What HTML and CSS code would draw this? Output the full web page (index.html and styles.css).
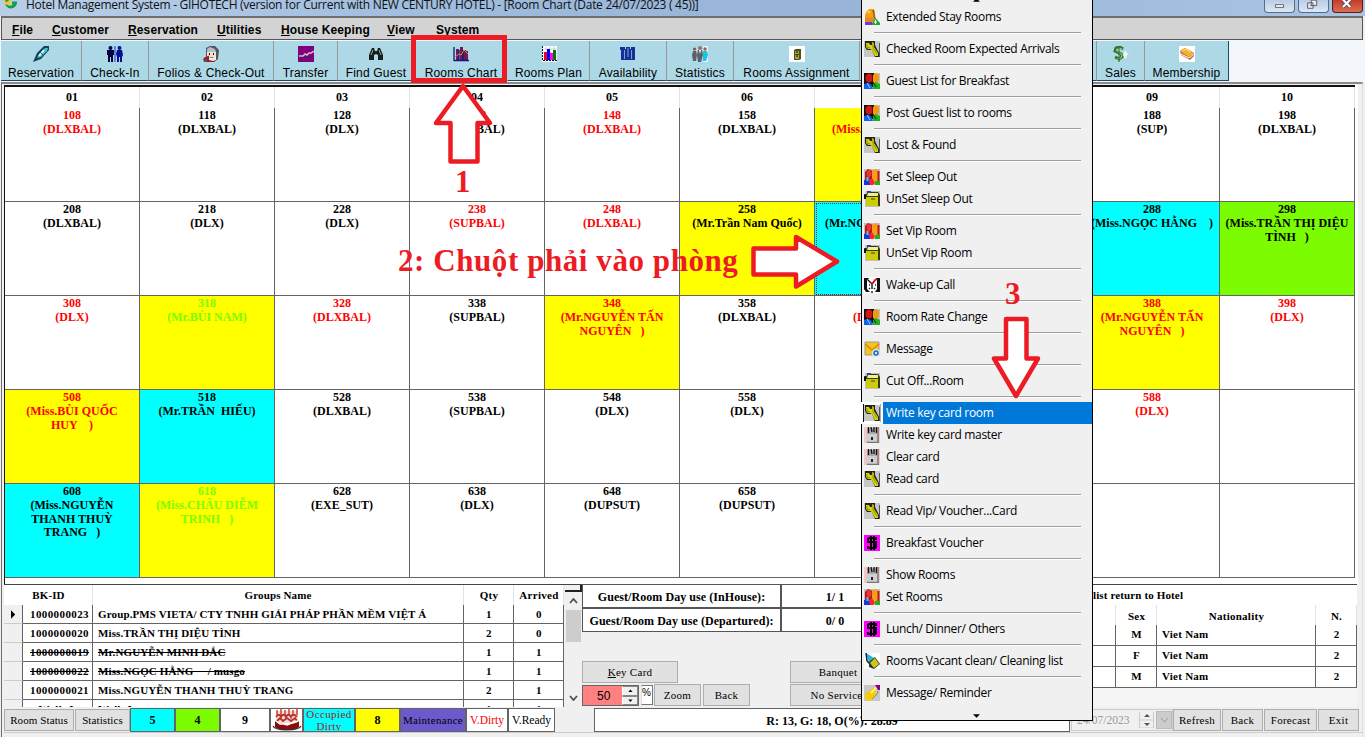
FILE: index.html
```html
<!DOCTYPE html>
<html lang="vi">
<head>
<meta charset="utf-8">
<title>Hotel Management System</title>
<link rel="stylesheet" href="styles.css">
</head>
<body>
<svg class="defs" width="0" height="0" aria-hidden="true">
  <symbol id="key" viewBox="0 0 16 16"><path fill="#c6c6c6" d="M0 0h16v16H0z"/><path d="M1 0h10v4l4 8v4h-4L8 9H3L1 6z" fill="#222"/><path d="M2 2h3l1 2h2V1l2 1v4l4 6v3h-3L8 9 6 8H4L2 6z" fill="#d6d60a"/><path d="M3 3v3l3 1M9 2v5l4 6" stroke="#8f8f00" fill="none"/><path d="M15.500 2v14" stroke="#555"/></symbol>
  <symbol id="people" viewBox="0 0 16 16"><path fill="#c0c0c0" d="M0 0h16v16H0z"/><path fill="#111" d="M0 0h10v14H0z"/><ellipse cx="5" cy="5" rx="3.500" ry="4.500" fill="#d21414"/><path d="M9 2l3-2 3 2v5l-2 3H9z" fill="#f09a10"/><path d="M0 16v-5l4-1 3 1 2 5z" fill="#1560e8"/><path d="M9 16v-5l3-2 4 2v5z" fill="#20b020"/><path d="M3 10l3 5" stroke="#7df"/><path d="M9 9l3 5" stroke="#222"/></symbol>
  <symbol id="sleep" viewBox="0 0 16 16"><path fill="#c0c0c0" d="M0 0h16v16H0z"/><path d="M1 3l3-3 5 2v10H1z" fill="#b8141c"/><ellipse cx="5" cy="4.500" rx="2.500" ry="3.500" fill="#e33"/><path d="M8 2l4-2 3 3v8l-4 2-3-2z" fill="#f4a014"/><path d="M0 11h5l2 5H0z" fill="#1638e0"/><path d="M5 11l3-2 3 5-2 2H6z" fill="#ff2030"/><path d="M11 12h5v4h-5z" fill="#20b020"/><path d="M14.500 2v10" stroke="#c01818" stroke-width="2"/><path d="M3.500 8v4" stroke="#40d0ff" stroke-width="2"/></symbol>
  <symbol id="folder" viewBox="0 0 16 16"><path fill="#c0c0c0" d="M1 0h15v16H1z"/><path d="M0 3h3V1h11l2 3v11H2V8H0z" fill="#3a3a10"/><path d="M2 6h12v9H2z" fill="#cccc08"/><path d="M3 0h4v2H3z" fill="#2438e0"/><path d="M4 2h10v3H3z" fill="#efef90"/><path d="M0 4h2v4H0z" fill="#111"/><path d="M7 7h4v2H7z" fill="#88880a"/></symbol>
  <symbol id="lock" viewBox="0 0 16 16"><path fill="#f4c8c8" d="M0 0h16v16H0z"/><path d="M3 8V1h10v15H3z" fill="#a8a8a8"/><path d="M4.500 0v6M7 0l1 5M10 0v5M12.500 0v6" stroke="#111" stroke-width="1.300"/><path d="M2 7h11v9H2z" fill="#cfcfcf"/><path d="M14 0v16M3 15.500h12" stroke="#777" stroke-width="1.500"/><path d="M7 10h2v3H7z" fill="#222"/></symbol>
  <symbol id="dollar" viewBox="0 0 16 16"><path fill="#f0f" d="M0 0h16v16H0z"/><path d="M12 5V3H5L4 4v3h8v5l-1 1H4v-2M7 1v14M10 1v14" fill="none" stroke="#000" stroke-width="2"/></symbol>
  <symbol id="clock" viewBox="0 0 16 16"><path fill="#fff" d="M0 0h16v16H0z"/><path d="M0 1h5L3 4v8l3 3H2l-2-3zM12 1h4v14h-5l2-3V4z" fill="#111"/><path d="M4 3l4 4v5M5 8h1M11 8h1M5 12l1-1M11 12l-1-1M8 14v2" stroke="#222" stroke-width="1.500" fill="none"/><path d="M8 7l4-5" stroke="#e00" stroke-width="2"/></symbol>
  <symbol id="mail" viewBox="0 0 16 16"><path d="M1 1h14v13H1z" fill="#f7c41c" stroke="#999"/><path d="M1 3l7 6 7-6" fill="none" stroke="#d28b00" stroke-width="1.500"/><circle cx="12" cy="12" r="4" fill="#d8e9f5"/><circle cx="12" cy="12" r="2" fill="none" stroke="#2264c4" stroke-width="1.500"/></symbol>
  <symbol id="extend" viewBox="0 0 16 16"><path d="M3 2l2-2h5l1 3-1 7H1V6z" fill="#f1a016"/><circle cx="5" cy="3" r="1.500" fill="#ffcb40"/><path d="M9 1l2 9" stroke="#a45b06" stroke-width="1.500"/><path d="M1 9l9-1 1 5H1z" fill="#e08a28"/><path d="M1 13h7v3H1z" fill="#703bd0"/><path d="M11.500 9l4.500 5v2H8v-2z" fill="#22a13a"/><path d="M11.500 11v4M10 13h3" stroke="#fff"/></symbol>
  <symbol id="brush" viewBox="0 0 16 16"><path fill="#fff" d="M0 0h16v16H0z"/><path d="M2 0l8 5-5 5z" fill="#27b8d0"/><path d="M2 0l1 8 3 3" stroke="#124" stroke-width="1.500" fill="none"/><path d="M5 9l6-5 5 7-6 5-5-2z" fill="#333"/><path d="M6 10l5-5 4 6-5 4z" fill="#d0c818"/></symbol>
  <symbol id="hand" viewBox="0 0 16 16"><path fill="#c8c8c8" d="M0 0h16v16H0z"/><path d="M2 15L1 9l4-3 6-4 1 3-1 6-5 5z" fill="#f6cd00"/><path d="M7 8l6-6" stroke="#fff37a" stroke-width="2"/><path d="M11 0h5v5h-2z" fill="#8b008b"/><path d="M8 14l5-5 1-3" stroke="#888" fill="none"/></symbol>
  <symbol id="t-pen" viewBox="0 0 16 16"><path d="M0 16l4-9 7-7h5v4l-8 9z" fill="#183f60"/><path d="M4 12l2-4 6-6h3l-1 3-6 6z" fill="#41c4cc"/><path d="M6 10l5-6" stroke="#fff" stroke-width="1.500"/><path d="M7 6l4 4" stroke="#16588c"/></symbol>
  <symbol id="t-checkin" viewBox="0 0 16 16"><path d="M8 0v16" stroke="#2030c0"/><circle cx="3.500" cy="2" r="2" fill="#000050"/><circle cx="12.500" cy="2" r="2" fill="#0010a0"/><path d="M0 4h7v5H6v7H4v-5H3v5H1V9H0z" fill="#000040"/><path d="M10 4h5l1 5-1 2v5h-2v-5h-1v5h-2v-5L9 8z" fill="#001090"/></symbol>
  <symbol id="t-folio" viewBox="0 0 16 16"><path d="M3 2l4-2h5l4 4-1 9-4 3H1l-1-3 3-1z" fill="#50556c"/><path d="M4 3l3-2 5 2 1 3H4z" fill="#b9bdc4"/><path d="M4 6h9v5H4z" fill="#f4e3c6"/><path d="M6 7h1v2H6zM10 7h1v2h-1z" fill="#111"/><path d="M1 13l4-2v4h5l3-2" fill="none" stroke="#a31b20" stroke-width="2"/><path d="M6 11l3 1 4-2v4l-3 1-4-1z" fill="#eee"/></symbol>
  <symbol id="t-transfer" viewBox="0 0 16 16"><path d="M0 0h16v16H0z" fill="#800080"/><path d="M1 10h4l2-2 2 1 2-2h2l3-2" fill="none" stroke="#d6bcc9" stroke-width="1.500"/><path d="M1 12h5l2-1h5" stroke="#333" fill="none"/></symbol>
  <symbol id="t-find" viewBox="0 0 16 16"><path d="M4 2h2l1 3h2l1-3h2l3 7v5h-5V9L8 8 6 9v5H1V9z" fill="#14201c"/><path d="M3 9l2-5M11 4l2 5" stroke="#98aaa0"/></symbol>
  <symbol id="t-chart" viewBox="0 0 16 16"><path d="M3 3h3v11H3zM7 1h3v13H7zM10 4h3v10h-3zM13 5h2v9h-2z" fill="#701858"/><path d="M1 1v13.500h15M6 4v10M10 4v10" stroke="#141480" stroke-width="1.300" fill="none"/><path d="M2 11l4-3 2 1 3-5 4 4" stroke="#e38b2b" fill="none"/></symbol>
  <symbol id="t-plan" viewBox="0 0 16 16"><path d="M1 0h15v16H1z" fill="#fff"/><path d="M1 3h15M1 7h15M1 11h15M5 0v16M9 0v16M13 0v16" stroke="#aaa" stroke-width=".5"/><path d="M1.500 0v14.500H16" stroke="#111" fill="none" stroke-dasharray="2 1"/><path d="M3 6h3v8H3z" fill="#e02"/><path d="M6 3h3v11H6z" fill="#00f"/><path d="M9 7h3v7H9z" fill="#f0f"/><path d="M12 4h3v10h-3z" fill="#070"/></symbol>
  <symbol id="t-avail" viewBox="0 0 16 16"><path d="M0 1h5v2h1V1h4v2h1V1h4v13H1V4H0z" fill="#16309a"/><path d="M4.500 4v9M8 2v9M11.500 4v9" stroke="#7f9bd8"/></symbol>
  <symbol id="t-stats" viewBox="0 0 16 16"><path d="M11 0h5v16h-5z" fill="#ddf6fc"/><circle cx="2.500" cy="3" r="1.500" fill="#9a4b34"/><circle cx="8" cy="2" r="2" fill="#8d7464"/><circle cx="13" cy="3" r="1.700" fill="#a05b46"/><path d="M1 5h3l1 4-1 6H1L0 9zM6 4h4l1 5-2 7H6L5 9z" fill="#5a6168"/><path d="M11 5h4l1 4-2 6h-3z" fill="#20c2dc"/><path d="M7 4l1 4 1-4" fill="#fff"/></symbol>
  <symbol id="t-assign" viewBox="0 0 16 16"><path d="M0 0h16v16H0z" fill="#fff"/><path d="M5 4l2-1h5v10l-2 1H5z" fill="#4f5115"/><path d="M6 5h4v3H6zM6 9h4v4H6z" fill="#a3a33c"/><path d="M7 6h2M7 10h2" stroke="#111"/></symbol>
  <symbol id="t-sales" viewBox="0 0 16 16"><path d="M12 4l2 3h2l-2 2-1 4-3-3z" fill="#fff" opacity=".8"/><path d="M10 3L7 1 3 2 2 5l6 3 1 3-3 2-4-2" fill="none" stroke="#34772e" stroke-width="3"/><path d="M9 3L6 2 3 4l6 5-1 3-4 1" fill="none" stroke="#94cc82"/><path d="M6 0v16" stroke="#2c6928"/></symbol>
  <symbol id="t-member" viewBox="0 0 16 16"><path d="M0 0h16v16H0z" fill="#fff"/><path d="M1 5l5-3 9 5v3l-4 4-9-5z" fill="#b9693c"/><path d="M1 5l5-3 9 5-5 4z" fill="#f6b02e"/><path d="M4 5l3-2 4 3" stroke="#ffe27c" fill="none"/><path d="M2 8l8 4 5-4" stroke="#fff" fill="none"/></symbol>
</svg>

<div class="window">
  <header class="titlebar">
    <svg class="logo" viewBox="0 0 16 16"><path d="M13 1H9a4.500 4.500 0 1 0 4.500 5H10" fill="none" stroke="#13a04a" stroke-width="3"/><path d="M0 1l4 4 5-2-1 6-5-2z" fill="#f1c630"/></svg>
    <span class="title">Hotel Management System - GIHOTECH (version for Current with NEW CENTURY HOTEL) - [Room Chart (Date 24/07/2023 ( 45))]</span>
    <div class="winbtns">
      <i class="wb"><svg viewBox="0 0 32 13"><path d="M11.500 4.500h9v3h-9z" fill="#fff" stroke="#556"/></svg></i>
      <i class="wb"><svg viewBox="0 0 32 13"><path d="M13.500-.5h6v6h-6zM9.500 2.500h6v6h-6z" fill="#e4ecf4" stroke="#556"/><path d="M12 5h2v1h-2z" fill="#556"/></svg></i>
      <i class="wb wb-close"><svg viewBox="0 0 32 13"><path d="M11-1l8 8M19-1l-8 8" stroke="#435" stroke-width="4"/><path d="M11-1l8 8M19-1l-8 8" stroke="#fff" stroke-width="2.500"/></svg></i>
    </div>
  </header>

  <nav class="menubar">
    <span class="m1"><u>F</u>ile</span><span class="m2"><u>C</u>ustomer</span><span class="m3"><u>R</u>eservation</span><span class="m4"><u>U</u>tilities</span><span class="m5"><u>H</u>ouse Keeping</span><span class="m6"><u>V</u>iew</span><span>System</span>
  </nav>

  <div class="toolbar">
    <div class="tool w1"><svg><use href="#t-pen"/></svg>Reservation</div>
    <div class="tool w2"><svg><use href="#t-checkin"/></svg>Check-In</div>
    <div class="tool w3"><svg><use href="#t-folio"/></svg>Folios &amp; Check-Out</div>
    <div class="tool w4"><svg><use href="#t-transfer"/></svg>Transfer</div>
    <div class="tool w5"><svg><use href="#t-find"/></svg>Find Guest</div>
    <div class="tool w6"><svg><use href="#t-chart"/></svg>Rooms Chart</div>
    <div class="tool w7"><svg><use href="#t-plan"/></svg>Rooms Plan</div>
    <div class="tool w8"><svg><use href="#t-avail"/></svg>Availability</div>
    <div class="tool w9"><svg><use href="#t-stats"/></svg>Statistics</div>
    <div class="tool w10"><svg><use href="#t-assign"/></svg>Rooms Assignment</div>
    <div class="tool w11"></div>
    <div class="tool w12"><svg><use href="#t-sales"/></svg>Sales</div>
    <div class="tool w13"><svg><use href="#t-member"/></svg>Membership</div>
  </div>

  <main class="work">
    <section class="rooms">
      <b>01</b><b>02</b><b>03</b><b>04</b><b>05</b><b>06</b><b></b><b></b><b>09</b><b>10</b>

      <div class="red">108<br>(DLXBAL)</div><div>118<br>(DLXBAL)</div><div>128<br>(DLX)</div><div>138<br>(SUPBAL)</div><div class="red">148<br>(DLXBAL)</div><div>158<br>(DLXBAL)</div><div class="yellow red cut"><br>(Miss.</div><div></div><div>188<br>(SUP)</div><div>198<br>(DLXBAL)</div>

      <div>208<br>(DLXBAL)</div><div>218<br>(DLX)</div><div>228<br>(DLX)</div><div class="red">238<br>(SUPBAL)</div><div class="red">248<br>(DLXBAL)</div><div class="yellow">258<br>(Mr.Trần Nam Quốc)</div><div class="cyan cut focus"><br>(Mr.NG</div><div></div><div class="cyan">288<br>(Miss.NGỌC HẰNG &nbsp; &nbsp;)</div><div class="green">298<br>(Miss.TRẦN THỊ DIỆU<br>TÌNH &nbsp; )</div>

      <div class="red">308<br>(DLX)</div><div class="yellow lime">318<br>(Mr.BÙI NAM)</div><div class="red">328<br>(DLXBAL)</div><div>338<br>(SUPBAL)</div><div class="yellow red">348<br>(Mr.NGUYỄN TẤN<br>NGUYÊN &nbsp; )</div><div>358<br>(DLXBAL)</div><div class="red cut deep"><br>(D</div><div></div><div class="yellow red">388<br>(Mr.NGUYỄN TẤN<br>NGUYÊN &nbsp; )</div><div class="red">398<br>(DLX)</div>

      <div class="yellow red">508<br>(Miss.BÙI QUỐC<br>HUY &nbsp; &nbsp;)</div><div class="cyan">518<br>(Mr.TRẦN &nbsp;HIẾU)</div><div>528<br>(DLXBAL)</div><div>538<br>(SUPBAL)</div><div>548<br>(DLX)</div><div>558<br>(DLX)</div><div></div><div></div><div class="red">588<br>(DLX)</div><div></div>

      <div class="cyan">608<br>(Miss.NGUYỄN<br>THANH THUỲ<br>TRANG &nbsp; )</div><div class="yellow lime">618<br>(Miss.CHÂU DIỄM<br>TRINH &nbsp; )</div><div>628<br>(EXE_SUT)</div><div>638<br>(DLX)</div><div>648<br>(DUPSUT)</div><div>658<br>(DUPSUT)</div><div></div><div></div><div></div><div></div>
    </section>

    <section class="lower">
      <div class="groups">
        <div class="grow ghead"><i></i><span>BK-ID</span><span>Groups Name</span><span>Qty</span><span>Arrived</span></div>
        <div class="grow"><i><svg viewBox="0 0 6 10"><path d="M0 0l5 5-5 5z"/></svg></i><span>1000000023</span><span>Group.PMS VIETA/ CTY TNHH GIẢI PHÁP PHẦN MỀM VIỆT Á</span><span>1</span><span>0</span></div>
        <div class="grow"><i></i><span>1000000020</span><span>Miss.TRẦN THỊ DIỆU TÌNH</span><span>2</span><span>0</span></div>
        <div class="grow"><i></i><span><s>1000000019</s></span><span><s>Mr.NGUYỄN MINH ĐẮC</s></span><span>1</span><span>1</span></div>
        <div class="grow"><i></i><span><s>1000000022</s></span><span><s>Miss.NGỌC HẰNG &nbsp; &nbsp; / musgo</s></span><span>1</span><span>1</span></div>
        <div class="grow"><i></i><span>1000000021</span><span>Miss.NGUYỄN THANH THUỲ TRANG</span><span>2</span><span>1</span></div>
        <div class="grow"><i></i><span>Walk-In</span><span>Walk-In</span><span>1</span><span>1</span></div>
      </div>
      <div class="scroll">
        <i class="corner"></i>
        <svg viewBox="0 0 9 6"><path d="M1 5l3.500-4L8 5" fill="none" stroke="#505050" stroke-width="1.800"/></svg>
        <i class="thumb"></i>
        <svg class="down" viewBox="0 0 9 6"><path d="M1 1l3.500 4L8 1" fill="none" stroke="#505050" stroke-width="1.800"/></svg>
      </div>
      <div class="mid">
        <div class="day"><span>Guest/Room Day use (InHouse):</span><span>1/ 1</span></div>
        <div class="day"><span>Guest/Room Day use (Departured):</span><span>0/ 0</span></div>
        <div class="midrow first"><div class="btn keycard"><span><u>K</u>ey Card</span></div><div class="btn wide">Banquet</div></div>
        <div class="midrow">
          <div class="spin"><span>50</span><i><svg viewBox="0 0 16 9"><path d="M6 6h5L8.500 3z"/></svg><svg viewBox="0 0 16 9"><path d="M6 3h5L8.500 6z"/></svg></i></div>
          <div class="pct">%</div><div class="btn zoom">Zoom</div><div class="btn zoom">Back</div><div class="btn wide">No Service</div>
        </div>
      </div>
      <div class="guests">
        <h2>list return to Hotel</h2>
        <div class="nrow nhead"><span></span><span>Sex</span><span>Nationality</span><span>N.</span></div>
        <div class="nrow"><span></span><span>M</span><span>Viet Nam</span><span>2</span></div>
        <div class="nrow"><span></span><span>F</span><span>Viet Nam</span><span>2</span></div>
        <div class="nrow"><span></span><span>M</span><span>Viet Nam</span><span>2</span></div>
      </div>
    </section>

    <footer class="status">
      <div class="btn s1">Room Status</div><div class="btn s2">Statistics</div>
      <div class="chip cyan c1">5</div><div class="chip green c2">4</div><div class="chip white c3">9</div>
      <div class="chip white c4"><svg viewBox="0 0 30 22"><path d="M4 2h22v12H4z" fill="#f6ddd4"/><path d="M5 1v5M9 0v6M13 1v5M17 0v6M21 1v5M25 0v6" stroke="#d04030" stroke-width="1.500"/><path d="M4 8c2-3 4-3 5 0 1-3 4-3 5 0 1-3 4-3 5 0 1-3 4-3 6 0M5 12l3-3 3 3 4-3 4 3 4-3 2 3" fill="none" stroke="#b83030" stroke-width="1.800"/><path d="M3 12c3 4 21 4 24 0v6c-3 4-21 4-24 0z" fill="#8c0c0c"/><path d="M1 17c2 5 26 5 28 0" stroke="#333" stroke-width="1.300" fill="none"/><path d="M4 12l4 3 4 0 3 1 5-2 6-2" stroke="#fff" stroke-width="1.500" fill="none"/></svg></div>
      <div class="chip cyan c5">Occupied<br>Dirty</div><div class="chip yellow c6">8</div><div class="chip c7">Maintenance</div><div class="chip white c8">V.Dirty</div><div class="chip white c9">V.Ready</div>
      <div class="summary">R: 13, G: 18, O(%): 28.89</div>
      <div class="date"><span>24/07/2023</span><svg viewBox="0 0 15 16"><path d="M.5 0v16h14V0M0 8h15" stroke="#ccc" fill="none"/><path d="M5 5h6L8 2zM5 11h6l-3 3z" fill="#555"/></svg><i><svg viewBox="0 0 9 6"><path d="M1 1l3.500 4L8 1" fill="none" stroke="#999"/></svg></i></div>
      <div class="btn r1">Refresh</div><div class="btn r2">Back</div><div class="btn r3">Forecast</div><div class="btn r4">Exit</div>
    </footer>
  </main>
</div>

<div class="popup">
  <svg class="more up" viewBox="0 0 8 4"><path d="M0 4h8L4 0z"/></svg>
  <div class="item"><svg><use href="#extend"/></svg><span>Extended Stay Rooms</span></div><hr>
  <div class="item"><svg><use href="#key"/></svg><span>Checked Room Expected Arrivals</span></div><hr>
  <div class="item"><svg><use href="#people"/></svg><span>Guest List for Breakfast</span></div><hr>
  <div class="item"><svg><use href="#people"/></svg><span>Post Guest list to rooms</span></div><hr>
  <div class="item"><svg><use href="#key"/></svg><span>Lost &amp; Found</span></div><hr>
  <div class="item"><svg><use href="#sleep"/></svg><span>Set Sleep Out</span></div>
  <div class="item"><svg><use href="#folder"/></svg><span>UnSet Sleep Out</span></div><hr>
  <div class="item"><svg><use href="#sleep"/></svg><span>Set Vip Room</span></div>
  <div class="item"><svg><use href="#folder"/></svg><span>UnSet Vip Room</span></div><hr>
  <div class="item"><svg><use href="#clock"/></svg><span>Wake-up Call</span></div><hr>
  <div class="item"><svg><use href="#people"/></svg><span>Room Rate Change</span></div><hr>
  <div class="item"><svg><use href="#mail"/></svg><span>Message</span></div><hr>
  <div class="item"><svg><use href="#folder"/></svg><span>Cut Off...Room</span></div><hr>
  <div class="item active"><svg><use href="#key"/></svg><span>Write key card room</span></div>
  <div class="item"><svg><use href="#lock"/></svg><span>Write key card master</span></div>
  <div class="item"><svg><use href="#lock"/></svg><span>Clear card</span></div>
  <div class="item"><svg><use href="#key"/></svg><span>Read card</span></div><hr>
  <div class="item"><svg><use href="#key"/></svg><span>Read Vip/ Voucher...Card</span></div><hr>
  <div class="item"><svg><use href="#dollar"/></svg><span>Breakfast Voucher</span></div><hr>
  <div class="item"><svg><use href="#lock"/></svg><span>Show Rooms</span></div>
  <div class="item"><svg><use href="#sleep"/></svg><span>Set Rooms</span></div><hr>
  <div class="item"><svg><use href="#dollar"/></svg><span>Lunch/ Dinner/ Others</span></div><hr>
  <div class="item"><svg><use href="#brush"/></svg><span>Rooms Vacant clean/ Cleaning list</span></div><hr>
  <div class="item"><svg><use href="#hand"/></svg><span>Message/ Reminder</span></div>
  <svg class="more" viewBox="0 0 8 4"><path d="M0 0h8L4 4z"/></svg>
</div>

<svg class="marks" viewBox="0 0 1365 737">
  <g fill="none" stroke="#ed1c24" stroke-width="5">
    <path d="M413.500 37.500h91v43h-91z"/>
    <g fill="#fff" stroke-width="4.500" stroke-linejoin="round">
      <path d="M463 86l27 37h-12.500v38.500h-27V123H436z"/>
      <path d="M753.500 248.500h42.500V237l41 24.500-41 25V274.500h-42.500z"/>
      <path d="M1006 319h20.500v39.500h11.500L1016 396l-22-37.500h12z"/>
    </g>
  </g>
</svg>
<div class="note n1">1</div>
<div class="note n2">2: Chuột phải vào phòng</div>
<div class="note n3">3</div>
</body>
</html>
```
FILE: styles.css
```css
* { box-sizing: border-box; }
html, body { margin: 0; height: 737px; overflow: hidden; }
body { position: relative; width: 1365px; background: #f0f0f0; font: 12px "Liberation Serif", serif; color: #000; }
i { font-style: normal; }
svg { display: block; }
.defs { position: absolute; }
.window { display: flex; flex-direction: column; height: 737px; }

/* title bar */
.titlebar { display: flex; height: 16px; background: linear-gradient(90deg, #b9cfe8, #9dbbdd 35%, #98b4d6 60%, #a9c4e3); overflow: hidden; }
.logo { width: 16px; height: 16px; margin: -3px 0 0 2px; flex: none; }
.title { margin-left: 8px; font: 12px/14px "Open Sans", sans-serif; letter-spacing: -.29px; white-space: nowrap; margin-top: -2px; color: #111; }
.winbtns { display: flex; gap: 3px; margin-left: auto; padding-right: 2px; }
.wb { width: 31px; height: 13px; border: 1px solid #536c8c; border-top: 0; border-radius: 0 0 4px 4px; background: linear-gradient(#b9cde3, #dce8f4); overflow: hidden; }
.wb svg { width: 100%; height: 13px; }
.wb-close { background: linear-gradient(#c43c28, #d96f54); border-color: #5c1a18; }

/* menu bar */
.menubar { display: flex; width: 1362px; height: 24px; margin-left: 1px; padding-left: 10px; border: 1px solid #555; border-top: 2px solid #6e6e6e; background: #d3d3d3; font: bold 12px/24px "Liberation Sans", sans-serif; letter-spacing: .12px; }
.menubar span { white-space: nowrap; }
.m1 { width: 40px; } .m2 { width: 76px; } .m3 { width: 89px; } .m4 { width: 64px; } .m5 { width: 106px; } .m6 { width: 49px; }

/* toolbar */
.toolbar { display: flex; height: 42px; padding: 1px 0 1px 1px; background: #f3f7fc; font: 12px "Liberation Sans", sans-serif; letter-spacing: .18px; }
.tool { display: flex; flex-direction: column; align-items: center; height: 40px; padding-top: 5px; border-right: 1px solid #999; border-bottom: 1px solid #1e4a66; background: #add8e6; line-height: 14px; gap: 4px; white-space: nowrap; }
.tool svg { width: 16px; height: 16px; }
.w1 { width: 81px; } .w2 { width: 67px; } .w3 { width: 125px; } .w4 { width: 64px; } .w5 { width: 77px; } .w6 { width: 93px; } .w7 { width: 82px; } .w8 { width: 77px; } .w9 { width: 67px; } .w10 { width: 126px; } .w11 { width: 237px; } .w12 { width: 48px; } .w13 { width: 84px; border-right-color: #1e4a66; }
.w5, .w6 { border-right-color: #add8e6; }

/* work area */
.work { flex: 1; display: flex; flex-direction: column; width: 1362px; margin-left: 1px; padding-left: 2px; border-top: 2px solid #8a8a8a; border-left: 1px solid #6e6e6e; border-right: 1px solid #ddd; background: #f0f0f0; }
.rooms { display: grid; grid-template-columns: repeat(10, 135px); grid-template-rows: 21px repeat(5, 94px); width: 1351px; height: 499px; margin-top: 1px; border-top: 2px solid #111; border-left: 1px solid #111; background: #fff; box-shadow: 3px 0 #fff; overflow: hidden; text-align: center; font-weight: bold; line-height: 13.800px; flex: none; }
.rooms > b { border-right: 1px solid #e2e2e2; line-height: 21px; }
.rooms > div { border-right: 1px solid #646464; border-bottom: 1px solid #646464; padding-top: 1px; white-space: nowrap; overflow: hidden; }
.rooms .cut { text-align: left; padding-left: 17px; }
.rooms .focus { padding-left: 10px; outline: 1px dotted #722; outline-offset: -2px; }
.rooms .deep { padding-left: 38px; }
.red { color: #f00; }
.lime { color: #7cfc00; }
.yellow { background: #ff0; }
.cyan { background: #0ff; }
.green { background: #7cfc00; }
.white { background: #fff; }

/* lower panels */
.lower { display: flex; height: 123px; overflow: hidden; font-weight: bold; font-size: 11px; letter-spacing: .3px; flex: none; }
.groups { width: 560px; border-top: 1px solid #444; background: #fff; overflow: hidden; flex: none; }
.grow { display: grid; grid-template-columns: 19px 70px 371px 50px 50px; height: 19px; line-height: 18px; text-align: center; }
.grow > * { border-right: 1px solid #646464; border-bottom: 1px solid #646464; white-space: nowrap; overflow: hidden; }
.grow > i { background: #f0f0f0; display: flex; align-items: center; padding-left: 7px; border-bottom-color: #ccc; }
.grow > i svg { width: 5px; height: 9px; }
.grow > :nth-child(2) { padding-left: 4px; letter-spacing: .4px; }
.grow > :nth-child(3) { text-align: left; padding-left: 5px; letter-spacing: .13px; }
.grow > :nth-child(n+4) { padding-left: 1px; }
.grow.ghead { height: 20px; line-height: 21px; }
.ghead > * { border-color: #e2e2e2; border-bottom: 0; }
.ghead > i { background: #fff; border: 0; }
.grow.ghead > :nth-child(2) { padding: 0 18px 0 0; letter-spacing: .1px; }
.grow.ghead > :nth-child(3) { text-align: center; padding-left: 0; }
.scroll { display: flex; flex-direction: column; align-items: center; width: 18px; background: #f0f0f0; border-top: 1px solid #444; flex: none; }
.scroll svg { width: 9px; height: 6px; margin-top: 6px; flex: none; }
.corner { width: 17px; height: 7px; border-right: 2px solid #222; border-bottom: 2px solid #222; flex: none; }
.thumb { width: 15px; height: 32px; margin-top: 6px; background: #cdcdcd; flex: none; }
.scroll .down { margin: auto 0 6px; }
.mid { width: 318px; flex: none; }
.day { display: flex; height: 24px; border: 1px solid #555; background: #fff; font-size: 12px; line-height: 24px; letter-spacing: .06px; text-align: center; }
.day span:first-child { width: 199px; border-right: 2px solid #555; }
.day span:last-child { width: 106px; }
.midrow { display: flex; height: 22px; margin-top: 1px; }
.midrow.first { margin-top: 29px; }
.btn { display: flex; align-items: center; justify-content: center; height: 22px; border: 1px solid #adadad; background: #e1e1e1; font: 11px "Liberation Serif", serif; letter-spacing: .28px; white-space: nowrap; }
.keycard { width: 96px; }
.wide { width: 96px; margin-left: auto; margin-right: 14px; }
.midrow:not(.first) .wide { padding-right: 3px; }
.spin { display: flex; width: 57px; height: 21px; margin-top: 1px; border: 1px solid #666; background: #ff8080; font: 12px/20px "Liberation Sans", sans-serif; }
.spin span { width: 39px; padding-left: 14px; letter-spacing: .2px; }
.spin i svg { width: 16px; height: 9.500px; background: #f0f0f0; border: 1px solid #888; border-left-color: #fff; }
.pct { width: 12px; height: 20px; margin: 1px 1px 0 2px; border: 1px solid #777; border-left-color: #ddd; background: #fff; font: 10px/14px "Liberation Sans", sans-serif; letter-spacing: 0; }
.zoom { width: 47px; margin-right: 2px; }
.guests { width: 457px; background: #f5f5f5; border-top: 1px solid #444; }
.guests h2 { height: 20px; margin: 0; padding-left: 193px; background: #fff; font-size: 11px; line-height: 21px; letter-spacing: .13px; }
.nrow { display: grid; grid-template-columns: 216px 41px 159px 41px; height: 21px; line-height: 18px; text-align: center; letter-spacing: .25px; }
.nrow span { background: #fff; border-right: 1px solid #646464; border-bottom: 1px solid #646464; padding-left: 1px; }
.nrow span:nth-child(3) { text-align: left; padding-left: 5px; }
.nrow.nhead { height: 20px; line-height: 22px; }
.nhead span { border-right-color: #e2e2e2; border-bottom: 0; }
.nrow.nhead span:nth-child(3) { text-align: center; padding-left: 1px; }

/* status strip */
.status { display: flex; height: 26px; border-bottom: 1px solid #ccc; padding-top: 1px; flex: none; }
.status .btn { height: 22px; margin-top: 1px; }
.status .s1 { width: 70px; letter-spacing: .1px; } .status .s2 { width: 55px; margin-left: 1px; letter-spacing: .1px; }
.chip { display: flex; align-items: center; justify-content: center; height: 24px; border: 1px solid #646464; font-weight: bold; overflow: hidden; text-align: center; }
.c1 { width: 45px; } .c2 { width: 45px; } .c3 { width: 50px; } .c4 { width: 33px; } .c4 svg { width: 30px; height: 22px; flex: none; }
.c5 { width: 52px; color: #a02020; font-weight: normal; font-size: 11px; line-height: 12px; letter-spacing: .4px; }
.c6 { width: 45px; }
.c7 { width: 66px; background: #6a5acd; font-weight: normal; font-size: 11px; letter-spacing: .3px; }
.c8 { width: 42px; color: #f00; font-weight: normal; font-size: 11.500px; }
.c9 { width: 47px; font-weight: normal; font-size: 11.500px; }
.summary { width: 476px; height: 24px; margin-left: 39px; border: 1px solid #646464; background: #fff; font-weight: bold; font-size: 12px; line-height: 24px; text-align: center; }
.date { display: flex; align-items: center; width: 102px; height: 22px; margin: 1px 0 0 1px; border: 1px solid #ccc; color: #999; }
.date span { width: 67px; padding-left: 5px; font-size: 11.500px; }
.date > svg { width: 15px; height: 16px; }
.date i { display: flex; align-items: center; justify-content: center; width: 16px; height: 18px; margin-left: 2px; border: 1px solid #bbb; background: #ccc; }
.date i svg { width: 9px; height: 6px; }
.r1 { width: 48px; } .r2 { width: 41px; margin-left: 1px; } .r3 { width: 53px; margin-left: 1px; } .r4 { width: 41px; margin-left: 1px; }

/* context menu */
.popup { position: absolute; left: 861px; top: 0; width: 232px; height: 721px; padding-top: 6px; border: 1px solid #000; border-top: 0; background: #f0f0f0; font: 12px/22px "Open Sans", sans-serif; letter-spacing: -.32px; }
.item { display: flex; align-items: center; height: 22px; padding-left: 2px; }
.item svg { width: 16px; height: 16px; flex: none; }
.item span { flex: 1; height: 22px; margin-left: 3px; padding-left: 3px; line-height: 22px; white-space: nowrap; }
.item.active { margin-left: -1px; background: #fff; padding-left: 2px; }
.item.active svg { width: 18px; height: 18px; border-left: 1px solid #111; border-right: 1px solid #aaa; }
.item.active span { margin-left: 2px; background: #0078d7; color: #fff; }
.popup hr { height: 2px; margin: 4px 11px 4px 12px; border: 0; border-top: 1px solid #a0a0a0; border-bottom: 1px solid #fff; }
.more { position: absolute; left: 111px; bottom: 2px; width: 7px; height: 4px; }
.more.up { top: -2px; bottom: auto; }

/* tutorial annotations */
.marks { position: absolute; left: 0; top: 0; width: 1365px; height: 737px; }
.note { position: absolute; color: #ed1c24; font: bold 31px/36px "Liberation Serif", serif; white-space: nowrap; }
.n1 { left: 455px; top: 164px; }
.n2 { left: 398px; top: 243px; letter-spacing: .57px; }
.n3 { left: 1005px; top: 276px; }
```
